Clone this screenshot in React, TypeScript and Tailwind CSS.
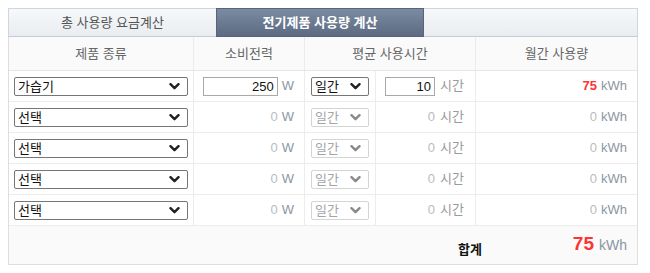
import React from 'react';

const FONT = { fontFamily: "'Liberation Sans','Noto Sans CJK KR',sans-serif" };

function Chevron({ muted }: { muted?: boolean }) {
  return (
    <svg width="11" height="7" viewBox="0 0 11 7" className="shrink-0">
      <path d="M1.5 1.2l4 4 4-4" fill="none" stroke={muted ? '#8a8a8a' : '#222'} strokeWidth="2.4" strokeLinecap="round" strokeLinejoin="round" />
    </svg>
  );
}

function FakeSelect({ label, width, disabled }: { label: string; width: string; disabled?: boolean }) {
  return (
    <div
      className={`${width} h-[19px] flex items-center justify-between pl-[3px] pr-[7px] rounded-[2px] border ${
        disabled ? 'border-[#d4d4d4] text-[#a5a5a5] bg-white' : 'border-[#767676] text-[#111] bg-white'
      } text-[13px] leading-none`}
    >
      <span className="pt-[1px]">{label}</span>
      <Chevron muted={disabled} />
    </div>
  );
}

function NumInput({ value, width }: { value: string; width: string }) {
  return (
    <div className={`${width} h-[19px] border border-[#a9a9a9] bg-white flex items-center justify-end pr-[3px] text-[13px] text-[#111] leading-none`}>
      {value}
    </div>
  );
}

const rows = [
  { product: '가습기', watt: '250', hours: '10', kwh: '75', active: true },
  { product: '선택', watt: '0', hours: '0', kwh: '0', active: false },
  { product: '선택', watt: '0', hours: '0', kwh: '0', active: false },
  { product: '선택', watt: '0', hours: '0', kwh: '0', active: false },
  { product: '선택', watt: '0', hours: '0', kwh: '0', active: false },
];

export default function App() {
  return (
    <div className="pt-2 pl-2 pb-[9px] bg-white" style={FONT}>
      <div className="w-[630px]">
        {/* tabs */}
        <div className="flex h-[29px] border border-[#cfd6de] border-b-[#c3cbd4] bg-linear-to-b from-[#f6f8fa] to-[#e9edf1]">
          <div className="w-[207px] flex items-center justify-center text-[13px] text-[#555]">총 사용량 요금계산</div>
          <div className="w-[208px] -my-px flex items-center justify-center text-[13px] font-bold text-white border border-[#56657b] bg-linear-to-b from-[#7b8ba1] to-[#5c6b81]">
            전기제품 사용량 계산
          </div>
        </div>

        <div className="border-l border-r border-[#dedede]">
          {/* header */}
          <div className="flex h-[34px] border-b border-[#e6e6e6] bg-[#fafafa] text-[13px] text-[#666]">
            <div className="w-[185px] border-r border-[#ebebeb] flex items-center justify-center">제품 종류</div>
            <div className="w-[111px] border-r border-[#ebebeb] flex items-center justify-center">소비전력</div>
            <div className="w-[171px] border-r border-[#ebebeb] flex items-center justify-center">평균 사용시간</div>
            <div className="w-[161px] flex items-center justify-center">월간 사용량</div>
          </div>

          {/* rows */}
          {rows.map((r, i) => (
            <div key={i} className="flex h-[31px] border-b border-[#ececec] text-[13px]">
              <div className="w-[185px] border-r border-[#ececec] flex items-center pl-[5px]">
                <FakeSelect label={r.product} width="w-[174px]" />
              </div>
              <div className="w-[111px] border-r border-[#ececec] flex items-center justify-end gap-[4px] pr-[10px]">
                {r.active ? <NumInput value={r.watt} width="w-[75px]" /> : <span className="text-[#bbb]">{r.watt}</span>}
                <span className="text-[#8c96a2]">W</span>
              </div>
              <div className="w-[71px] border-r border-[#ececec] flex items-center pl-[6px]">
                <FakeSelect label="일간" width="w-[58px]" disabled={!r.active} />
              </div>
              <div className="w-[100px] border-r border-[#ececec] flex items-center justify-end gap-[5px] pr-[11px]">
                {r.active ? <NumInput value={r.hours} width="w-[50px]" /> : <span className="text-[#bbb]">{r.hours}</span>}
                <span className="text-[#9a9a9a]">시간</span>
              </div>
              <div className="w-[161px] flex items-center justify-end gap-[4px] pr-[10px]">
                <span className={r.active ? 'text-[#ff3333] font-bold' : 'text-[#bbb]'}>{r.kwh}</span>
                <span className="text-[#8c96a2]">kWh</span>
              </div>
            </div>
          ))}

          {/* total */}
          <div className="flex items-center h-[39px] border-b border-[#dedede] bg-[#fafafa]">
            <div className="w-[449px]" />
            <span className="text-[13px] font-bold text-[#111] mt-[10px]">합계</span>
            <div className="flex-1 flex items-baseline justify-end gap-[5px] pr-[10px]">
              <span className="text-[19px] font-bold text-[#ff3333] leading-none">75</span>
              <span className="text-[14px] text-[#8c96a2]">kWh</span>
            </div>
          </div>
        </div>
      </div>
    </div>
  );
}
